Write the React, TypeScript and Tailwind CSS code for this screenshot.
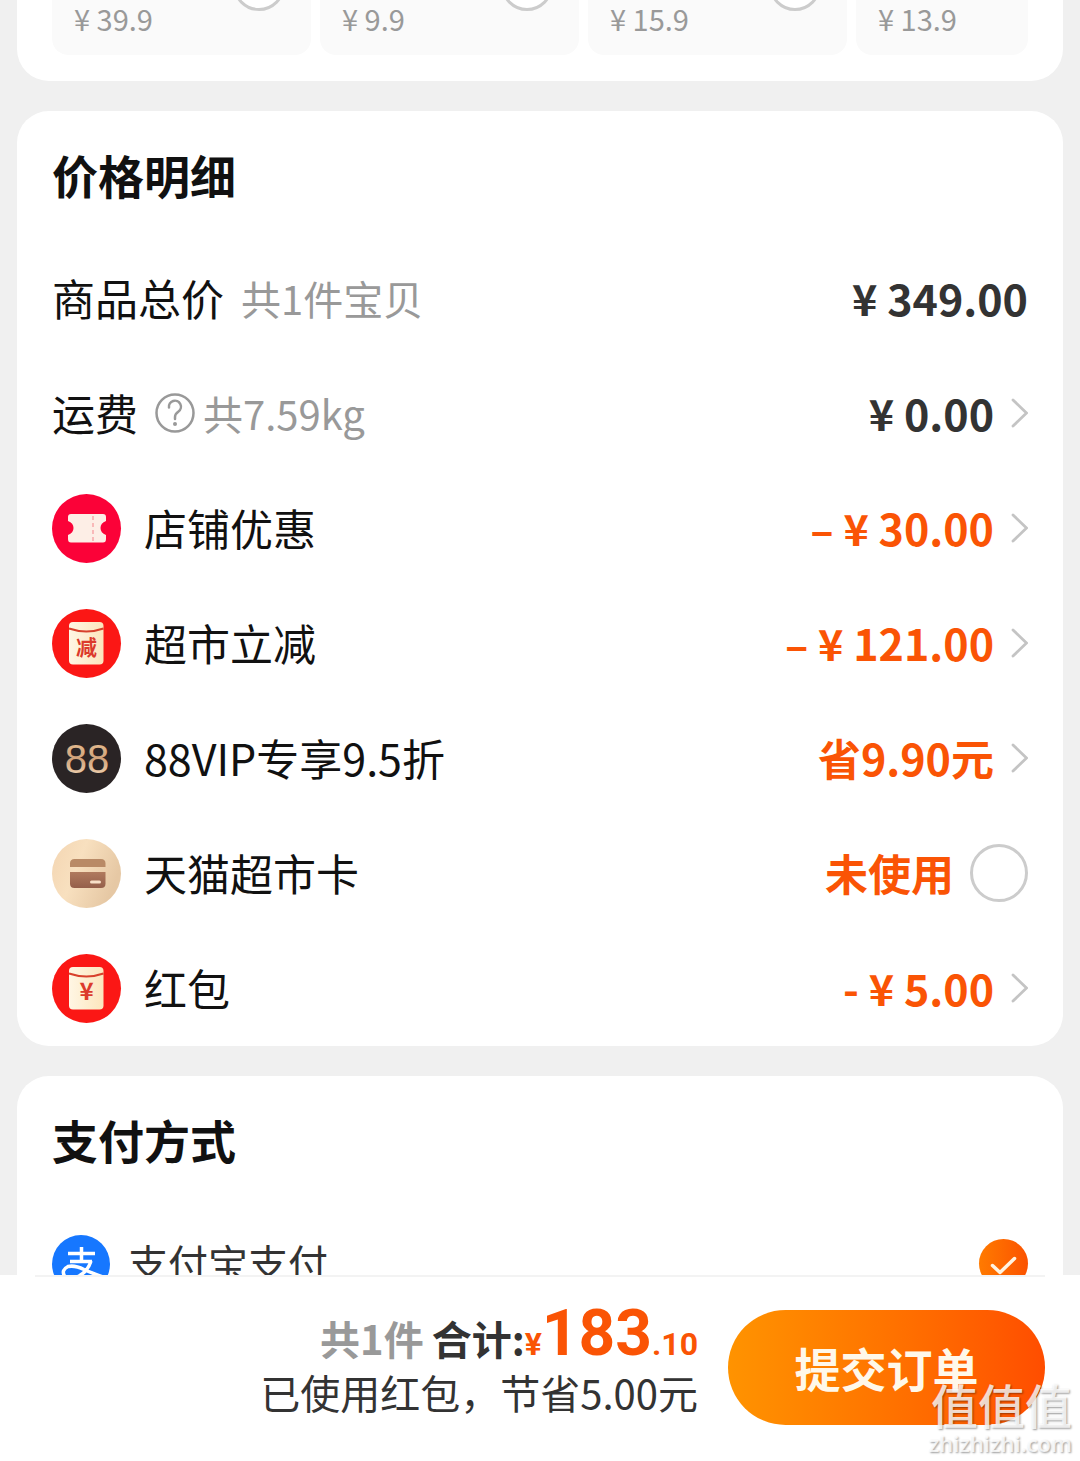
import type { ReactNode } from "react";

const ADD_ONS = [
  { id: "a", price: "39.9" },
  { id: "b", price: "9.9" },
  { id: "c", price: "15.9" },
  { id: "d", price: "13.9" },
];

function TicketIcon() {
  return (
    <svg viewBox="0 0 70 70" className="size-[70px] shrink-0" aria-hidden="true">
      <circle cx="34.500" cy="35.500" r="34.5" fill="#fb0238" />
      <path
        d="M19 21H51Q54 21 54 24V28Q48.500 30 48.500 35T54 42V46Q54 49.500 51 49.500H19Q16 49.500 16 46V42Q21.500 40 21.500 35T16 28V24Q16 21 19 21Z"
        fill="#fdeee6"
      />
      <path d="M41 23V48" stroke="#f9b9b9" strokeWidth="2" strokeDasharray="4 3" />
    </svg>
  );
}

function EnvelopeIcon({ mark, size }: { mark: string; size: number }) {
  return (
    <svg viewBox="0 0 70 70" className="size-[70px] shrink-0" aria-hidden="true">
      <defs>
        <linearGradient id="paper" x1="0" y1="0" x2="1" y2="0">
          <stop offset="0" stopColor="#fff6e4" />
          <stop offset="1" stopColor="#fce5bd" />
        </linearGradient>
      </defs>
      <circle cx="34.500" cy="35.500" r="34.5" fill="#fb1715" />
      <rect x="17" y="14" width="34.500" height="42.500" rx="4" fill="url(#paper)" />
      <path d="M17 20.500Q34.500 26.500 51.500 20.500" fill="none" stroke="#d8402c" strokeWidth="2" />
      <text
        x="34.5"
        y="47"
        textAnchor="middle"
        fontSize={size}
        fontWeight="700"
        fill="#dc3a2c"
      >
        {mark}
      </text>
    </svg>
  );
}

function VipIcon() {
  return (
    <svg viewBox="0 0 70 70" className="size-[70px] shrink-0" aria-hidden="true">
      <defs>
        <linearGradient id="gold" x1="0" y1="0" x2="0" y2="1">
          <stop offset="0" stopColor="#eac497" />
          <stop offset="0.5" stopColor="#d0a27a" />
          <stop offset="1" stopColor="#f7dfc0" />
        </linearGradient>
      </defs>
      <circle cx="34.500" cy="35.500" r="34.5" fill="#2a2425" />
      <text
        x="35"
        y="50"
        textAnchor="middle"
        fontSize="40"
        fill="url(#gold)"
        className="font-['Liberation_Sans',sans-serif]"
      >
        88
      </text>
    </svg>
  );
}

function CardIcon() {
  return (
    <svg viewBox="0 0 70 70" className="size-[70px] shrink-0" aria-hidden="true">
      <defs>
        <linearGradient id="sand" x1="0" y1="0" x2="1" y2="0.4">
          <stop offset="0" stopColor="#f3d5b2" />
          <stop offset="0.45" stopColor="#f8e0bf" />
          <stop offset="1" stopColor="#e6c8a4" />
        </linearGradient>
        <linearGradient id="cardBody" x1="0" y1="0" x2="0" y2="1">
          <stop offset="0" stopColor="#b07a5e" />
          <stop offset="1" stopColor="#955f4a" />
        </linearGradient>
      </defs>
      <circle cx="34.500" cy="35.500" r="34.5" fill="url(#sand)" />
      <path d="M18 29V25.500Q18 21 22.500 21H49Q53.500 21 53.500 25.500V29Z" fill="#b98a66" />
      <path d="M18 34H53.500V45.500Q53.500 50 49 50H22.500Q18 50 18 45.500Z" fill="url(#cardBody)" />
      <path d="M39.500 44H47.500" stroke="#f8e0c8" strokeWidth="3" strokeLinecap="round" />
    </svg>
  );
}

function AlipayIcon() {
  return (
    <svg viewBox="0 0 58 58" className="size-[58px] shrink-0" aria-hidden="true">
      <circle cx="29" cy="29" r="29" fill="#1677ff" />
      <g fill="none" stroke="#fff" strokeWidth="3.5">
        <path d="M16 18.500H43M29.500 12V26M18 26.500H40" />
        <path d="M39 26Q36 36 27 41Q17 46 12.500 41Q9 35 16 31.500Q23 30 32 34.500Q42 39 54 43" />
      </g>
    </svg>
  );
}

function HelpIcon() {
  return (
    <svg viewBox="0 0 40 40" className="size-10" fill="none" aria-hidden="true">
      <circle cx="20" cy="20" r="18.5" stroke="#999" strokeWidth="2.500" />
      <path
        d="M14 14.500A6 6 0 1 1 23.500 18.500Q20 21 20 24V26"
        stroke="#999"
        strokeWidth="2.500"
        strokeLinecap="round"
      />
      <circle cx="20" cy="31" r="2" fill="#999" />
    </svg>
  );
}

function Chevron() {
  return (
    <svg viewBox="0 0 18 30" className="h-[30px] w-[18px] shrink-0" fill="none" aria-hidden="true">
      <path d="M3 2L16.500 15L3 28" stroke="#c4c4c4" strokeWidth="2.800" strokeLinecap="round" />
    </svg>
  );
}

function Card({ title, children }: { title: string; children: ReactNode }) {
  return (
    <section className="mx-[17px] rounded-[32px] bg-white px-[35px]">
      <h2 className="flex h-[130px] items-center pb-1 text-[46px] font-bold text-[#111]">{title}</h2>
      {children}
    </section>
  );
}

const DISCOUNTS = [
  { label: "店铺优惠", amount: "– ¥ 30.00", icon: <TicketIcon /> },
  { label: "超市立减", amount: "– ¥ 121.00", icon: <EnvelopeIcon mark="减" size={21} /> },
  { label: "88VIP专享9.5折", amount: "省9.90元", icon: <VipIcon /> },
  { label: "天猫超市卡", amount: "未使用", icon: <CardIcon />, selectable: true },
  { label: "红包", amount: "- ¥ 5.00", icon: <EnvelopeIcon mark="¥" size={24} /> },
];

const ROW =
  "flex h-[115px] w-full items-center justify-between pb-0.5 text-[43px] leading-none text-[#111]";
const RADIO = "size-[58px] shrink-0 appearance-none rounded-full border-3 border-[#ccc] bg-white";

export default function App() {
  return (
    <main className="flex h-screen flex-col overflow-hidden bg-[#f0f0f0] font-['Noto_Sans_CJK_SC',sans-serif]">
      <div className="flex min-h-0 flex-1 flex-col gap-[30px] overflow-hidden">
        {/* Add-on strip, scrolled most of the way off the top */}
        <section className="mx-[17px] shrink-0 rounded-b-[32px] bg-white px-[35px] pb-[26px]">
          <ul className="flex gap-[9px] overflow-hidden rounded-b-2xl">
            {ADD_ONS.map((item) => (
              <li
                key={item.id}
                className="relative h-[55px] w-[259px] shrink-0 overflow-hidden rounded-b-2xl bg-[#fafafa] px-[22px]"
              >
                <label htmlFor={`add-${item.id}`} className="block text-[29px] leading-9 text-[#999]">
                  ¥ {item.price}
                </label>
                <input
                  id={`add-${item.id}`}
                  type="checkbox"
                  className="absolute -top-[41px] right-[26px] size-[52px] appearance-none rounded-full border-3 border-[#ccc] bg-white"
                />
              </li>
            ))}
          </ul>
        </section>

        <div className="shrink-0">
          <Card title="价格明细">
            <ul>
              <li className={ROW}>
                <span className="flex items-center gap-[17px]">
                  商品总价
                  <span className="text-[40px] text-[#999]">共1件宝贝</span>
                </span>
                <span className="font-bold text-[#333]">¥ 349.00</span>
              </li>
              <li>
                <button type="button" className={ROW}>
                  <span className="flex items-center gap-[17px]">
                    运费
                    <span className="flex items-center gap-2 text-[40px] text-[#999]">
                      <HelpIcon />
                      共7.59kg
                    </span>
                  </span>
                  <span className="flex items-center gap-4 font-bold text-[#333]">
                    ¥ 0.00
                    <Chevron />
                  </span>
                </button>
              </li>
              {DISCOUNTS.map(({ label, amount, icon, selectable }) => (
                <li key={label}>
                  {selectable ? (
                    <label className={ROW}>
                      <span className="flex items-center gap-[22px]">
                        {icon}
                        {label}
                      </span>
                      <span className="flex items-center gap-4 font-bold text-[#fa5405]">
                        {amount}
                        <input type="checkbox" className={RADIO} />
                      </span>
                    </label>
                  ) : (
                    <button type="button" className={ROW}>
                      <span className="flex items-center gap-[22px]">
                        {icon}
                        {label}
                      </span>
                      <span className="flex items-center gap-4 font-bold text-[#fa5405]">
                        {amount}
                        <Chevron />
                      </span>
                    </button>
                  )}
                </li>
              ))}
            </ul>
          </Card>
        </div>

        <div className="shrink-0">
          <Card title="支付方式">
            <label className="flex h-[115px] items-center gap-[18px] text-[40px] leading-none text-[#333]">
              <AlipayIcon />
              <span className="pb-1">支付宝支付</span>
              <span className="relative ml-auto size-[49px]">
                <input
                  type="radio"
                  name="pay"
                  defaultChecked
                  className="size-full appearance-none rounded-full bg-linear-to-r from-[#ff7a00] to-[#fb5200]"
                />
                <svg viewBox="0 0 49 49" className="absolute inset-0" fill="none" aria-hidden="true">
                  <path
                    d="M13.500 26.500L21 33.500L35.500 19.500"
                    stroke="#fff3e0"
                    strokeWidth="3.500"
                    strokeLinecap="round"
                    strokeLinejoin="round"
                  />
                </svg>
              </span>
            </label>
          </Card>
        </div>
      </div>

      {/* Sticky checkout bar */}
      <footer className="relative shrink-0 bg-white px-[35px]">
        <div className="flex h-[186px] items-center justify-end gap-[30px] border-t-2 border-[#f3f3f3] pb-1">
          <div className="pb-1 text-right text-[40px] text-[#333]">
            <p className="flex h-[54px] items-baseline justify-end leading-10 font-bold">
              <span className="mr-2 text-[#999]">共1件</span>
              合计:
              <span className="font-[Roboto,sans-serif] text-[32px] text-[#fa5405]">
                ¥<span className="text-[64px]">183</span>.10
              </span>
            </p>
            <p className="leading-12">已使用红包，节省5.00元</p>
          </div>
          <button
            type="button"
            className="h-[115px] w-[317px] shrink-0 rounded-full bg-linear-to-r from-[#ff9300] to-[#ff4d00] text-[46px] leading-none font-bold text-[#fff8ea]"
          >
            提交订单
          </button>
        </div>
        <div className="pointer-events-none absolute right-2 bottom-1.5 text-right text-white/80 [text-shadow:1px_1px_2px_rgb(0_0_0/0.4)]">
          <p className="text-[47px] leading-[54px] font-medium">值值值</p>
          <p className="font-['Open_Sans',sans-serif] text-[22px] leading-6 font-semibold">zhizhizhi.com</p>
        </div>
      </footer>
    </main>
  );
}
